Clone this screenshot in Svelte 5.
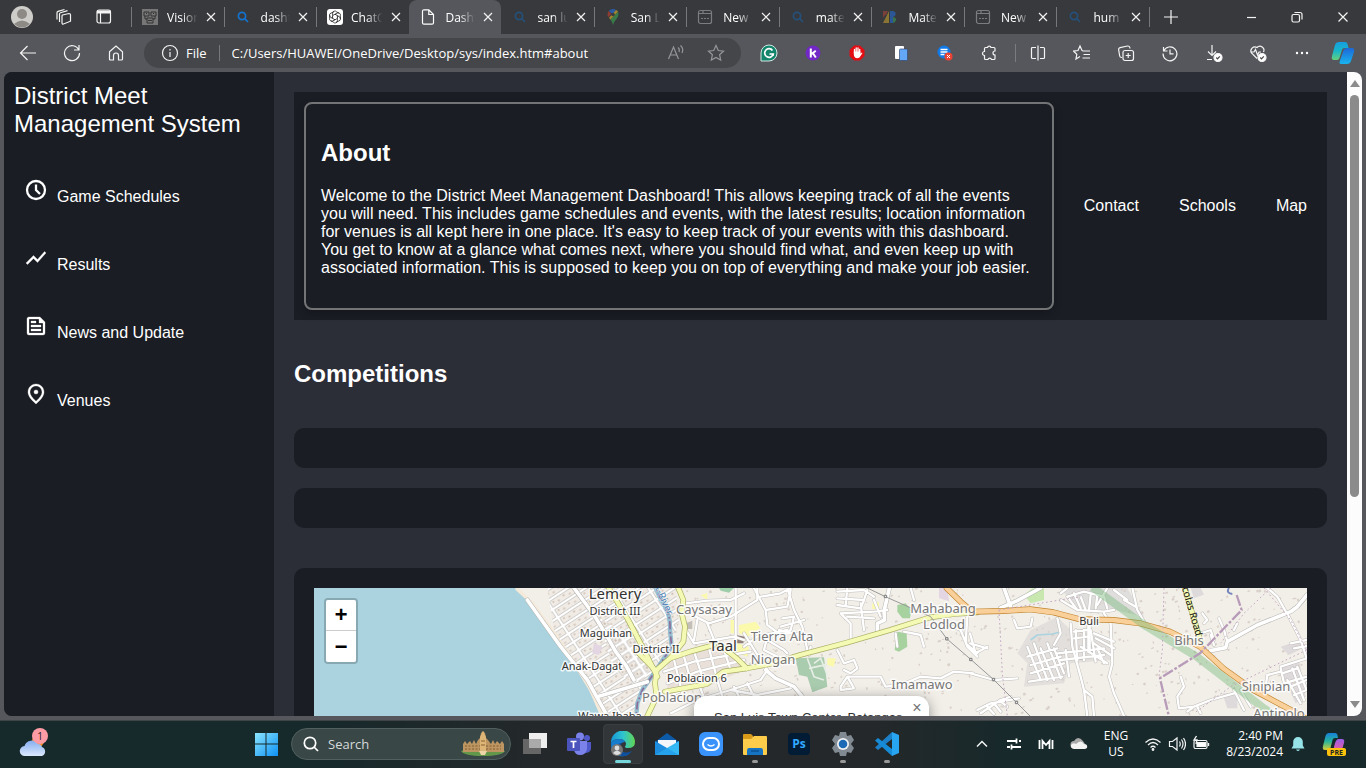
<script>
  const tabs = [
    { icon: 'vision', text: 'Vision' },
    { icon: 'search', text: 'dasht' },
    { icon: 'gpt', text: 'ChatG' },
    { icon: 'page', text: 'Dasht', active: true },
    { icon: 'searchDim', text: 'san lu' },
    { icon: 'pin', text: 'San L' },
    { icon: 'newtab', text: 'New' },
    { icon: 'searchDim', text: 'mate' },
    { icon: 'material', text: 'Mate' },
    { icon: 'newtab', text: 'New' },
    { icon: 'searchDim', text: 'hum' }
  ];

  const extensions = [
    ['Grammarly', 'grammarly'], ['Kami', 'kami'], ['AdBlock', 'adblock'],
    ['Clipboard', 'clip'], ['Reader', 'reader'], ['Extensions', 'puzzle']
  ];
  const tools = [
    ['Split screen', 'split'], ['Favorites', 'favs'], ['Collections', 'collect'],
    ['History', 'history'], ['Downloads', 'download'],
    ['Browser essentials', 'heart'], ['Settings and more', 'dots']
  ];
  const nav = [
    ['Game Schedules', 'clock'], ['Results', 'trend'],
    ['News and Update', 'news'], ['Venues', 'venue']
  ];
  const links = ['Contact', 'Schools', 'Map'];
  const apps = [
    ['Task view', 'taskview'], ['Teams', 'teams'], ['Edge', 'edge', 'active'],
    ['Mail', 'mail'], ['Browser', 'zoomapp'], ['File Explorer', 'files', 'open'],
    ['Photoshop', 'ps'], ['Settings', 'gear', 'open'], ['Visual Studio Code', 'code', 'open']
  ];

  // Road geometry is drawn at three units per pixel.
  const minor = [
    // Taal
    'M1115 70 L1180 62 L1250 60 L1290 40 M1145 110 L1185 130 L1250 110 L1330 60 L1330 24 M1110 140 L1140 190 L1200 180 L1260 170 L1290 180',
    'M1050 275 L1140 245 L1250 225 L1310 215 M1060 310 L1150 275 L1290 240 M1075 345 L1170 300 L1250 265 M1140 215 L1165 290 M1185 205 L1210 300 L1240 400 M1225 195 L1250 270 M1110 230 L1130 300 M1080 240 L1105 340 M1150 300 L1180 380',
    'M1070 400 L1150 360 L1250 330 L1340 300 L1360 270 M1250 330 L1330 345 L1430 325 M1300 310 L1320 350 M1260 320 L1275 350',
    'M1290 160 L1340 240 L1360 270 M1290 200 L1330 170 L1420 150 M1320 24 L1355 90 L1360 135 L1400 165 L1430 150 L1440 110 L1405 115 M1355 90 L1420 80 L1430 30 M1340 50 L1400 40 L1430 24 M1420 24 L1440 90 L1465 140 L1480 210 M1400 140 L1470 120 M1395 150 L1480 170 M1360 180 L1410 210 L1420 220 M1360 170 L1350 210 L1390 230',
    'M1265 24 L1265 180 M1180 130 L1200 180 M1150 120 L1140 180',
    // Mahabang
    'M1570 35 L1650 30 L1680 50 M1570 55 L1650 60 L1660 30 M1570 75 L1640 85 L1650 60 M1600 24 L1595 75 M1580 100 L1610 130 L1610 175 M1580 100 L1680 95 L1720 90 M1600 110 L1680 115 M1640 70 L1650 150 M1680 60 L1700 110 M1790 24 L1800 60',
    'M1490 200 L1485 225 M1570 210 L1590 250 L1620 240 L1630 265 L1610 280 L1590 270 M1600 290 L1620 325 L1580 330 L1580 320 L1600 290 L1640 290 L1700 290 L1715 320 L1760 315 L1820 290 L1880 295 L1920 275 L1978 280',
    'M1770 155 L1820 165 L1830 200 M1745 160 L1750 200 M1890 130 L1940 150 L1960 200 L1990 230 M1960 110 L1955 190 L1990 220',
    // Buli
    'M2100 120 L2110 145 L2150 140 L2155 115 M2230 115 L2240 160 L2220 195 M2270 130 L2275 200 L2300 290 L2310 330 L2320 408 M2310 330 L2335 350 L2340 408',
    'M2380 24 L2350 75 M2370 100 L2390 130 L2395 250 L2385 290 L2400 340 L2430 408 M2455 24 L2470 90 L2490 125 M2430 60 L2465 80',
    'M2240 40 L2260 24 M2260 50 L2290 90 M2280 40 L2300 85 M2300 50 L2315 90 M2330 45 L2325 90 M2350 45 L2345 85 M2240 60 L2290 90 L2370 95 L2400 90 M2260 50 L2310 35 L2370 50 L2380 85 M2400 30 L2440 60',
    // Buli subdivision
    'M2140 200 L2180 300 M2160 190 L2200 300 M2180 205 L2220 300 M2200 190 L2240 295 M2220 205 L2250 280 M2140 230 L2230 205 M2150 255 L2240 230 M2150 280 L2250 250 M2145 305 L2245 290 M2230 220 L2370 205 M2240 240 L2370 225 M2255 210 L2265 290 M2285 150 L2290 240 M2310 150 L2310 240 M2280 155 L2320 150 M2280 175 L2320 170 M2340 160 L2400 185 M2345 175 L2400 205 M2340 190 L2390 225 M2350 205 L2370 250 M2330 150 L2345 245 M2300 200 L2380 250',
    'M1990 390 L2030 370 L2115 355 M2000 400 L2060 360 L2090 350 M2020 380 L2040 402 M2040 370 L2060 395 M2060 365 L2080 380 M1970 280 L2040 300 L2110 295 M1968 160 L1985 220 L2020 200 M1968 190 L2020 205',
    // Bihis and Sinipian
    'M2660 160 L2690 150 L2700 180 M2670 130 L2680 120 L2665 100 M2715 115 L2730 150 L2740 185 M2770 130 L2760 150 M2690 165 L2700 195',
    'M2600 290 L2610 320 L2590 350 L2595 385 L2640 380 L2690 360 L2760 340 M2620 395 L2640 380 M2650 380 L2660 400 M2760 330 L2790 390 M2780 330 L2810 380',
    'M2860 24 L2890 50 L2930 120 L2960 180 L2978 235 M2930 190 L2978 180 M2940 205 L2978 198 M2900 260 L2978 235 M2900 265 L2910 310 L2978 290 M2905 280 L2950 265 M2920 300 L2960 370 M2935 265 L2970 360 M2950 260 L2978 330 M2930 320 L2978 300 M2940 345 L2978 330 M2855 320 L2860 285 L2900 275'
  ];
  const wide = [
    'M780 24 L840 105 L880 170 L905 215 L935 255 L960 300',
    'M850 350 L935 325 L1000 305',
    'M640 60 L740 200 L820 300 L880 408',
    'M1355 270 L1385 295 L1440 320 L1465 350',
    'M1726 24 L1710 95 L1712 120 L1690 130 L1690 150',
    'M2060 84 L2110 62 L2180 24 M2070 24 L2090 80',
    'M2325 135 L2325 215',
    'M2690 212 L2735 203 L2740 185 L2830 135 L2930 95 L2950 80 L2979 45'
  ];
  const yellow = [
    'M870 0 L940 115 L985 200 L1020 270 L1030 290',
    'M1093 24 L1108 60 L1103 100 L1113 140 L1108 185 L1068 235 L1028 270 L1023 310 L1028 350 L1000 408',
    'M970 215 L1023 270',
    'M1068 235 L1128 215 L1200 195',
    'M1218 195 L1268 235 L1298 265',
    'M1053 335 L1178 312 L1228 275 L1298 265 L1378 250 L1458 225 L1598 188 L1728 150 L1848 112 L1920 102 L1990 97',
    'M2612 24 L2635 100 L2660 185'
  ];
  const orange = [
    'M1898 24 L1940 65 L1975 95 L2068 93 L2148 88 L2218 97 L2298 118 L2398 120 L2478 130 L2568 155 L2658 200 L2728 265 L2818 330 L2940 395 L2979 418'
  ];

  // Small building footprints, spread by a fixed linear sequence.
  let seed = 71;
  const rnd = () => (seed = (seed * 16807) % 2147483647) / 2147483647;
  const spots = [];
  for (let i = 0; i < 480; i++) {
    const x = i < 60 ? 1080 + rnd() * 400 : 1080 + rnd() * 1890;
    spots.push([Math.round(x), Math.round(24 + rnd() * 384), Math.round(3 + rnd() * 6), Math.round(3 + rnd() * 5)]);
  }

  const labels = [
    [301, 11, 'Lemery', 'big'], [301, 27, 'District III', 'small'], [292, 49, 'Maguihan', 'small'],
    [342, 65, 'District II', 'small'], [278, 82, 'Anak-Dagat', 'small'], [296, 132, 'Wawa Ibaba', 'small'],
    [390, 26, 'Caysasay', 'grey'], [468, 53, 'Tierra Alta', 'grey'], [409, 63, 'Taal', 'big'],
    [459, 76, 'Niogan', 'grey'], [383, 94, 'Poblacion 6', 'small'], [358, 114, 'Poblacion', 'grey'],
    [629, 25, 'Mahabang', 'grey'], [630, 41, 'Lodlod', 'grey'], [608, 101, 'Imamawo', 'grey'],
    [775, 37, 'Buli', 'small'], [875, 57, 'Bihis', 'grey'], [952, 103, 'Sinipian', 'grey'],
    [965, 130, 'Antipolo', 'grey']
  ];
</script>

{#snippet icon(name)}
  {#if name === 'vision'}
    <svg width="16" height="16" viewBox="0 0 16 16"><path fill="#777" d="M0 0h16v16H0z"/><path d="M2 3h5v4H2zM9 3h5v4H9zM5 9h6v5H5zM3 7v3h2M13 7v3h-2M6 11.5h4" fill="none" stroke="#333"/><path d="M4 4.5h1M11 4.5h1" stroke="#333"/></svg>
  {:else if name === 'search' || name === 'searchDim'}
    <svg width="16" height="16" viewBox="0 0 16 16" fill="none" stroke={name === 'search' ? '#1373d1' : '#245079'} stroke-width="1.7"><circle cx="7" cy="7" r="3.6"/><path d="M9.7 9.7 13 13"/></svg>
  {:else if name === 'gpt'}
    <svg width="16" height="16" viewBox="0 0 16 16"><rect width="16" height="16" rx="3" fill="#fff"/><g fill="none" stroke="#222" stroke-width=".8">{#each [0, 60, 120, 180, 240, 300] as a}<path transform="rotate({a} 8 8)" d="M8 5.2 5.6 6.6V4.2a2.3 2.3 0 0 1 4-1.4L12 4.3"/>{/each}</g></svg>
  {:else if name === 'page'}
    <svg width="16" height="16" viewBox="0 0 16 16" fill="none" stroke="#fff" stroke-width="1.2"><path d="M4 .8h4.8L13.500 5.500v8.200q0 1.500-1.500 1.500H4q-1.500 0-1.500-1.500V2.300Q2.500.8 4 .8zM8.800 1v4.500h4.500"/></svg>
  {:else if name === 'pin'}
    <svg width="16" height="16" viewBox="0 0 16 16"><path d="M8 0a5.500 5.500 0 0 0-4.200 2L8 5.500 11 .9A6 6 0 0 0 8 0z" fill="#2b5aa5"/><path d="M3.800 2a5.500 5.500 0 0 0-.5 6.200L6.200 5z" fill="#8f3a33"/><path d="M11 .9 4 8.800l1.500 2 7.700-8A6 6 0 0 0 11 .9z" fill="#a08432"/><path d="M13 2.800 5.500 10.800Q7.400 13 8 16q.7-3 3-5.500 3.600-4 2-7.700z" fill="#3a7a48"/><circle cx="8" cy="5.500" r="1.800" fill="#3c3d40"/></svg>
  {:else if name === 'newtab'}
    <svg width="16" height="16" viewBox="0 0 16 16" fill="none" stroke="#7c7d80" stroke-width="1.200"><rect x="1.500" y="1.500" width="13" height="13" rx="2"/><path d="M2 4.500h12M6 1.500v3M4 9.500h2M7 9.500h2M10 9.500h2"/></svg>
  {:else if name === 'material'}
    <svg width="16" height="16" viewBox="0 0 16 16"><path d="M1 2h5L1 9z" fill="#79403b"/><path d="M7 2v12H1z" fill="#8a7433"/><path d="M8 2h3v12H8z" fill="#2c5796"/><path d="M11 2q4 1 2 5l-2 1z" fill="#2c5796"/><path d="M11 8q5 1 2 5l-2 1z" fill="#39734a"/><circle cx="3" cy="4" r="2" fill="#79403b"/></svg>
  {:else if name === 'close'}
    <svg width="12" height="12" viewBox="0 0 12 12" stroke="#f2f2f2" stroke-width="1.200"><path d="m2 2 8 8M10 2l-8 8"/></svg>
  {:else if name === 'grammarly'}
    <svg width="18" height="18" viewBox="0 0 18 18"><path d="M9 1a8 8 0 0 1 0 16H1V9a8 8 0 0 1 8-8z" fill="#12846c" stroke="#cfe8e1"/><path d="M12.500 6.500A4.300 4.300 0 1 0 13.200 10H9.500M13.200 9.800v2" fill="none" stroke="#fff" stroke-width="1.700"/></svg>
  {:else if name === 'kami'}
    <svg width="16" height="16" viewBox="0 0 16 16"><circle cx="8" cy="8" r="7.500" fill="#7128c7"/><path d="M5.800 3.500v9M10.800 5.800 6.500 9M7.800 8l3 4.500" fill="none" stroke="#fff" stroke-width="2"/></svg>
  {:else if name === 'adblock'}
    <svg width="16" height="16" viewBox="0 0 16 16"><path d="M5 .5h6L15.500 5v6L11 15.500H5L.5 11V5z" fill="#e40d13"/><path d="M5.500 8V4.500M7.200 7V3M9 7V3M10.700 9V4.500" fill="none" stroke="#fff" stroke-width="1.300" stroke-linecap="round"/><path d="M4.800 6.500h6.600V9l1.300-1.500.8.6L10.500 12.500q-2.500 1.500-4.500 0-1.200-1.500-1.200-3z" fill="#fff"/></svg>
  {:else if name === 'clip'}
    <svg width="16" height="16" viewBox="0 0 16 16"><rect x="2" y="1" width="9" height="13" rx="1" fill="#fff"/><rect x="6.500" y="4" width="8" height="11.500" rx="1" fill="#65a7f7" stroke="#344c73" stroke-width=".7"/></svg>
  {:else if name === 'reader'}
    <svg width="16" height="16" viewBox="0 0 16 16"><circle cx="7" cy="7" r="6.500" fill="#117ae8"/><path d="M3.500 4.500h7M3.500 7h7M3.500 9.500h4" stroke="#fff" stroke-width="1.300"/><circle cx="11.500" cy="11.500" r="4" fill="#ea4335"/><path d="m10 10 3 3m0-3-3 3" stroke="#fff"/></svg>
  {:else if name === 'puzzle'}
    <svg width="18" height="18" viewBox="0 0 18 18" class="line"><path d="M7.500 3.500a1.800 1.800 0 0 1 3.500 0H14q1 0 1 1V7a1.800 1.800 0 0 0 0 4v3.500q0 1-1 1h-2.500a1.900 1.900 0 0 0-3.600 0H5.500q-1 0-1-1v-3a1.900 1.900 0 0 1 0-4v-3q0-1 1-1z"/></svg>
  {:else if name === 'split'}
    <svg width="18" height="18" viewBox="0 0 18 18" class="line"><path d="M7 3.500H3.500q-1 0-1 1v9q0 1 1 1H7M11 3.500h3.500q1 0 1 1v9q0 1-1 1H11M9 1.500v15"/></svg>
  {:else if name === 'favs'}
    <svg width="18" height="18" viewBox="0 0 18 18" class="line"><path d="M9 6.500 7 2 5 6.500l-4.500.6 3.300 3.100L3 15l4-2.500M10 7h7M10.500 10.500H17M9.500 14H17M9 6.500l1 .5"/></svg>
  {:else if name === 'collect'}
    <svg width="18" height="18" viewBox="0 0 18 18" class="line"><rect x="6" y="6.500" width="10.500" height="10" rx="2"/><path d="M11.200 9v5M8.700 11.500h5M5 13.500q-2 .2-2.300-1.500L1.600 5.500Q1.500 4 3 3.600L10.500 2q2-.2 2.300 1.500l.2 1"/></svg>
  {:else if name === 'history'}
    <svg width="18" height="18" viewBox="0 0 18 18" class="line"><path d="M2.500 3v4h4M2.700 7A6.900 6.900 0 1 1 2.100 9.500M9 5.500v4.300h3.500"/></svg>
  {:else if name === 'download'}
    <svg width="18" height="18" viewBox="0 0 18 18" class="line"><path d="M7 1v10M3 7.500 7 11.500l4-4M2 15.500h5"/><circle cx="13" cy="13.500" r="4" fill="#fff"/><path stroke="#444" d="m11.300 13.500 1.200 1.300 2.300-2.500"/></svg>
  {:else if name === 'heart'}
    <svg width="18" height="18" viewBox="0 0 18 18" class="line"><path d="M8 14.500 2.500 9A4 4 0 0 1 8 3.500 4 4 0 0 1 14.500 8M2 8h3l1.500-2.500L8.500 11 10 8h2"/><circle cx="13" cy="13.500" r="4" fill="#fff"/><path stroke="#444" d="m11.300 13.500 1.200 1.300 2.300-2.500"/></svg>
  {:else if name === 'dots'}
    <svg width="18" height="18" viewBox="0 0 18 18" fill="#fff"><circle cx="4" cy="9" r="1.200"/><circle cx="9" cy="9" r="1.200"/><circle cx="14" cy="9" r="1.200"/></svg>
  {:else if name === 'copilot'}
    <svg width="26" height="26" viewBox="0 0 26 26"><path d="M9 2h6q2 0 2.500 2l1 4h-4q-2 0-2.600 2l-2.400 8q-.7 2-2.500 2H4q-3 0-2-4L5 5q1-3 4-3z" fill="url(#cpA)"/><path d="M17 24h-6q-2 0-1.500-2l4-11.500Q14.300 8 16.500 8H22q3 0 2 4l-3 9q-1 3-4 3z" fill="url(#cpB)"/><defs><linearGradient id="cpA" x2="0" y2="1"><stop stop-color="#159de0"/><stop offset=".5" stop-color="#18b7c9"/><stop offset="1" stop-color="#65d27b"/></linearGradient><linearGradient id="cpB" x2="0" y2="1"><stop stop-color="#1d67d8"/><stop offset="1" stop-color="#18b4ee"/></linearGradient></defs></svg>
  {:else if name === 'clock'}
    <svg width="24" height="24" viewBox="0 0 24 24" fill="none" stroke="#fff" stroke-width="2.300"><circle cx="12" cy="12" r="9"/><path d="M12 6.500V12l4 4"/></svg>
  {:else if name === 'trend'}
    <svg width="24" height="24" viewBox="0 0 24 24" fill="#fff" stroke="#fff" stroke-width=".3"><path d="m3.500 18.500 6-6 4 4L22 6.900l-1.400-1.400-7.100 8-4-4L2 17z"/></svg>
  {:else if name === 'news'}
    <svg width="24" height="24" viewBox="0 0 24 24" fill="#fff" stroke="#fff" stroke-width=".3"><path d="m16 3 5 5v11a2 2 0 0 1-2 2H5a2 2 0 0 1-2-2V5c0-1.100.9-2 2-2h11zm-1 2H5v14h14V9h-4V5zM7 7h5v2H7zm0 4h10v2H7zm0 4h10v2H7z" fill-rule="evenodd"/></svg>
  {:else if name === 'venue'}
    <svg width="24" height="24" viewBox="0 0 24 24" fill="#fff" stroke="#fff" stroke-width=".3"><path fill-rule="evenodd" d="M12 2C8 2 4 5 4 10.200c0 3.300 2.700 7.200 8 11.800 5.300-4.600 8-8.500 8-11.800C20 5 16 2 12 2zm0 17.300c-4-3.700-6-6.700-6-9.100C6 6.600 8.600 4 12 4s6 2.600 6 6.200c0 2.400-2 5.400-6 9.100z"/><circle cx="12" cy="10" r="2.100"/></svg>
  {:else if name === 'taskview'}
    <svg width="26" height="26" viewBox="0 0 26 26"><path d="M1 8h18v15H1z" fill="#666"/><path d="M7 2h18v15H7z" fill="#eee"/><path d="M7 8h12v9H7z" fill="#aaa"/></svg>
  {:else if name === 'teams'}
    <svg width="26" height="26" viewBox="0 0 26 26"><circle cx="21" cy="7" r="3" fill="#5059c9"/><path d="M17 11h8v7q-1 4-6 4z" fill="#5059c9"/><circle cx="14" cy="5.500" r="4" fill="#7b83eb"/><path d="M9 10h12v8q-1 6-7 6-5 0-6-5z" fill="#7b83eb"/><rect x="1" y="7" width="13" height="13" rx="1" fill="#4b53bc"/><path d="M4.500 10.500h6M7.500 10.500v6.500" stroke="#fff" stroke-width="1.700"/></svg>
  {:else if name === 'edge'}
    <svg width="26" height="26" viewBox="0 0 26 26"><defs><linearGradient id="eg"><stop stop-color="#1796d4"/><stop offset=".5" stop-color="#2ec4cf"/><stop offset="1" stop-color="#61d653"/></linearGradient></defs><path d="M1 12A12 12 0 0 1 25 11q0 6-7 6-3 0-3-1.500 1-1 1-3Q15 8 9 8 3 8 1 12z" fill="url(#eg)"/><path d="M1 12q2-4 8-4 5 0 6 3-6 0-5 6 2 6 9 6-4 3-9 2Q0 22 1 12z" fill="#167ccd"/><path d="M12 12q-3 2-2 6 3 6 12 2-4 6-11 5-7-3-4-10 1-3 5-3z" fill="#104f9e"/><circle cx="7" cy="19" r="6" fill="#777"/><circle cx="7" cy="17" r="2.400" fill="#ddd"/><path d="M3 22q4-5 8 0-4 4-8 0z" fill="#ddd"/></svg>
  {:else if name === 'mail'}
    <svg width="26" height="26" viewBox="0 0 26 26"><path d="M1 11 13 2l12 9v4H1z" fill="#0d5ba8"/><path d="M4 9h18v8H4z" fill="#f4f6f9"/><path d="m1 10 12 7L1 24z" fill="#1d8de0"/><path d="m25 10-24 14h24z" fill="#35b8f4"/><path d="m1 24 12-7 12 7z" fill="#25a2ec"/></svg>
  {:else if name === 'zoomapp'}
    <svg width="26" height="26" viewBox="0 0 26 26"><rect x="1" y="1" width="24" height="24" rx="6" fill="#3a92fb"/><rect x="5" y="7" width="16" height="12" rx="6" fill="none" stroke="#fff" stroke-width="2"/><path d="M9.500 13.500q3.500 3 7 0" fill="none" stroke="#fff" stroke-width="1.300"/></svg>
  {:else if name === 'files'}
    <svg width="26" height="26" viewBox="0 0 26 26"><path d="M1 4q0-1 1-1h7l2 2v6H1z" fill="#d99a1a"/><path d="M1 8h8l3-3h12q1 0 1 1v17q0 1-1 1H2q-1 0-1-1z" fill="#fccc4a"/><path d="M5 20q0-3 2-3h12q2 0 2 3v4H5z" fill="#1673c2"/><path d="M9 20h8" stroke="#0c4f92" stroke-width="1.500"/></svg>
  {:else if name === 'ps'}
    <svg width="24" height="24" viewBox="0 0 24 24"><rect x="1" y="1" width="22" height="22" rx="4" fill="#021c35"/><text x="12" y="16" text-anchor="middle" class="pstext">Ps</text></svg>
  {:else if name === 'gear'}
    <svg width="26" height="26" viewBox="0 0 26 26"><path d="m10 1 6 0 1 4 4-1 3 5-3 4 3 4-3 5-4-1-1 4h-6l-1-4-4 1-3-5 3-4-3-4 3-5 4 1z" fill="#818a92"/><circle cx="13" cy="13" r="6" fill="#eef1f3"/><circle cx="13" cy="13" r="4.300" fill="#1c69b5"/></svg>
  {:else if name === 'code'}
    <svg width="26" height="26" viewBox="0 0 26 26"><path d="m18 1 7 3v18l-7 3z" fill="#28a5f0"/><path d="M18 1v7L4 19l-3-2.500z" fill="#1c80c9"/><path d="M18 25v-7L4 7 1 9.500z" fill="#168bd8"/></svg>
  {/if}
{/snippet}

<div class="screen">
  <header class="tabbar">
    <div class="lead">
      <button aria-label="Profile"><svg width="24" height="24" viewBox="0 0 24 24"><circle cx="12" cy="12" r="11" fill="#cfcdc9"/><circle cx="12" cy="9" r="5" fill="#8d8a86"/><path d="M4 19q8-7 16 0-8 7-16 0z" fill="#8d8a86"/></svg></button>
      <button aria-label="Workspaces"><svg width="18" height="18" viewBox="0 0 18 18" class="line"><path d="M8.500 7 15 5.500q1.500 0 1.500 1.200v6.500L9.500 16q-1.500.3-1.500-1V8q0-.8.500-1zM5.500 14V6q0-1 1-1.300l7-2M3 11.500V4.700q0-1 1-1.300L10.500 1.500"/></svg></button>
      <button aria-label="Tab actions"><svg width="18" height="18" viewBox="0 0 18 18" class="line"><rect x="2" y="2" width="13.500" height="13" rx="2"/><path d="M2 4h13.500" stroke-width="3"/><path d="M5.500 5v10"/></svg></button>
    </div>
    <nav class="tabs" aria-label="Open tabs">
      {#each tabs as tab}
        <div class="tab" class:active={tab.active}>
          <span class="fav">{@render icon(tab.icon)}</span>
          <span class="tabtext">{tab.text}</span>
          <button class="x" aria-label="Close tab">{@render icon('close')}</button>
        </div>
      {/each}
    </nav>
    <button class="plus" aria-label="New tab"><svg width="16" height="16" viewBox="0 0 16 16" class="line"><path d="M8 1v14M1 8h14"/></svg></button>
    <div class="winctl">
      <button aria-label="Minimize"><svg width="12" height="12" viewBox="0 0 12 12" class="line"><path d="M2 6.500h9"/></svg></button>
      <button aria-label="Restore"><svg width="12" height="12" viewBox="0 0 12 12" class="line"><rect x="1" y="3.500" width="7.500" height="7.500" rx="1.500"/><path d="M3.500 1.500h5.500q2 0 2 2V8.500"/></svg></button>
      <button aria-label="Close"><svg width="12" height="12" viewBox="0 0 12 12" class="line"><path d="m1.500 1.500 9 9m0-9-9 9"/></svg></button>
    </div>
  </header>

  <div class="toolbar">
    <button class="tool" aria-label="Back"><svg width="18" height="18" viewBox="0 0 18 18" class="line"><path d="M17 9H1.500M8.500 2l-7 7 7 7"/></svg></button>
    <button class="tool" aria-label="Refresh"><svg width="18" height="18" viewBox="0 0 18 18" class="line"><path d="M15.800 6A7.500 7.500 0 1 0 16.500 9M16 1v5h-5"/></svg></button>
    <button class="tool" aria-label="Home"><svg width="18" height="18" viewBox="0 0 18 18" class="line"><path d="M2.500 7.800 9 2l6.500 5.800V15q0 1-1 1h-3v-4.500a2.500 2.500 0 0 0-5 0V16h-3q-1 0-1-1z"/></svg></button>
    <div class="address">
      <svg width="18" height="18" viewBox="0 0 18 18" class="line"><circle cx="9" cy="9" r="7.500"/><path d="M9 8v5M9 5v1.500"/></svg>
      <span class="file">File</span>
      <input aria-label="Address" value="C:/Users/HUAWEI/OneDrive/Desktop/sys/index.htm#about" />
      <button aria-label="Read aloud"><svg width="18" height="18" viewBox="0 0 18 18" class="line dim"><path d="M1.500 15 6.500 3l5 12M3 11h7M11 3.500q2 1.500 1 4.500M13.500 1.500q3.500 3 1.500 7.500"/></svg></button>
      <button aria-label="Favorite"><svg width="18" height="18" viewBox="0 0 18 18" class="line dim"><path d="m9 1.500 2.300 5 5.200.6-3.900 3.600 1.100 5.300L9 13.400 4.300 16l1.100-5.300L1.500 7.100l5.200-.6z"/></svg></button>
    </div>
    {#each extensions as [label, name]}
      <button class="tool" aria-label={label}>{@render icon(name)}</button>
    {/each}
    <span class="rule"></span>
    {#each tools as [label, name]}
      <button class="tool" aria-label={label}>{@render icon(name)}</button>
    {/each}
    <button class="tool cop" aria-label="Copilot">{@render icon('copilot')}</button>
  </div>

  <div class="view">
    <aside>
      <h1>District Meet Management System</h1>
      <ul>
        {#each nav as [label, name]}
          <li><a href="#{name}">{@render icon(name)}<span>{label}</span></a></li>
        {/each}
      </ul>
    </aside>
    <main>
      <section class="top">
        <article>
          <h2>About</h2>
          <p>Welcome to the District Meet Management Dashboard! This allows keeping track of all the events you will need. This includes game schedules and events, with the latest results; location information for venues is all kept here in one place. It's easy to keep track of your events with this dashboard. You get to know at a glance what comes next, where you should find what, and even keep up with associated information. This is supposed to keep you on top of everything and make your job easier.</p>
        </article>
        <nav>
          {#each links as link}<a href="#{link}">{link}</a>{/each}
        </nav>
      </section>
      <h2 class="comp">Competitions</h2>
      <div class="bars"><div></div><div></div></div>
      <section class="mapcard">
        <div class="map">
          <svg class="ground" role="img" aria-label="Map of Lemery and Taal">
            <defs>
              <pattern id="blocks" width="34" height="30" patternUnits="userSpaceOnUse" patternTransform="rotate(-33)">
                <path d="M0 0h34v30H0z" fill="#f0ebe4"/>
                <path d="M11 11h6v7h-6zM21 17h6v5h-6z" fill="#cdbfb6"/>
                <path d="M0 0h34v30H0z" fill="none" stroke="#b9b6b3" stroke-width="13"/>
                <path d="M0 0h34v30H0z" fill="none" stroke="#fff" stroke-width="9"/>
              </pattern>
              <pattern id="longblocks" width="92" height="29" patternUnits="userSpaceOnUse" patternTransform="rotate(-33)">
                <path d="M0 0h92v29H0z" fill="#f0ebe4"/>
                <path d="M12 9h5v5h-5zM28 14h6v5h-6zM48 9h6v5h-6zM66 15h7v4h-7z" fill="#cdbfb6"/>
                <path d="M0 0h92v29H0z" fill="none" stroke="#c2bfbb" stroke-width="11"/>
                <path d="M0 0h92v29H0z" fill="none" stroke="#fff" stroke-width="7"/>
              </pattern>
            </defs>
            <rect width="100%" height="100%" fill="#f2efe9"/>
            <g transform="translate(0 -8) scale(.33333)">
              <path d="M700 24H1085L1095 130 1060 205 1030 255 985 315 965 410H865L830 330 775 240 720 150z" fill="url(#longblocks)"/>
              <path d="M850 110 1000 200 1010 260 975 320 900 270z" fill="url(#blocks)"/>
              <path d="M1060 240 1200 195 1300 240 1290 270 1180 320 1060 350z" fill="#e9e1d9"/>
              <path d="M2150 150 2230 110 2270 150 2400 180 2390 240 2270 250 2250 310 2130 320 2140 250 2110 220z" fill="#e2dfdd"/>
              <path d="M2240 24 2440 24 2490 110 2400 90 2290 90z" fill="#e0dedc"/>
              <path d="M2630 24h30l10 20-30 10zM2900 200l60-20 15 20-50 25zM2725 340l45 0 0 45-30 0zM2895 260l60-20 20 110-30 20z" fill="#ded9db"/>
              <path d="M1875 24h25l5 40-30-10zM840 190l25 10-10 25-20-5z" fill="#e3d5e2"/>
              {#each spots as [x, y, w, h]}<rect {x} {y} width={w} height={h} fill="#d9d0c9" transform="rotate(-20 {x} {y})"/>{/each}
              <path d="M0 0H590L650 65 705 140 770 235 825 325 865 420H0z" fill="#aad3df"/>
              <path d="M606 24 655 70 710 145 775 240 830 330 870 420" fill="none" stroke="#f5ead9" stroke-width="10"/>
              <path d="M1445 235 1530 232 1540 320 1495 337 1480 290 1455 285z" fill="#a9cbae"/>
              <path d="M1480 235l20 55 30 10M1500 250l20-15 20 50M1485 265l55-12" fill="none" stroke="#e7eee6" stroke-width="5"/>
              <path d="M1750 75 1775 70 1792 90 1788 115 1765 115 1750 95zM1750 155 1778 160 1780 200 1755 215 1742 210z" fill="#a7d2a0"/>
              <path d="M1215 24h45l-15 14-25-6z" fill="#9fceaa"/><path d="M2130 45l25-20 35 0 0 35-40 10z" fill="#c8e8b0"/>
              <path d="M1250 120h15v40h-15zM1275 135l50-10 15 20-40 25-25-10zM1270 190l35 10-5 30-30-10zM1540 235l25 0-5 25-20-5zM1675 70l20-3 0 20-20 0zM1160 45l20-5 0 20z" fill="#fbf9ac"/>
              <path d="M1265 165l28 5-5 20-20 0z" fill="#8f7d77"/><path d="M1115 130l20-8 0 25-15 0z" fill="#c4beb9"/>
              <path d="M1015 0Q1030 40 1053 80 1070 110 1068 150L1073 200 1023 275 985 330 970 370 966 420" fill="none" stroke="#94bdd0" stroke-width="13"/>
              <path d="M1015 0Q1030 40 1053 80 1070 110 1068 150L1073 200 1023 275 985 330 970 370 966 420" fill="none" stroke="#8a6e99" stroke-width="5" stroke-dasharray="24 8 5 8"/>
              <path d="M2150 180l20-15 45-3 25-6" fill="none" stroke="#aad3df" stroke-width="5"/>
              {#each minor as d}<path {d} class="c1"/>{/each}
              {#each wide as d}<path {d} class="c2"/>{/each}
              {#each minor as d}<path {d} class="f1"/>{/each}
              {#each wide as d}<path {d} class="f2"/>{/each}
              {#each yellow as d}<path {d} class="cy"/>{/each}
              {#each yellow as d}<path {d} class="fy"/>{/each}
              {#each orange as d}<path {d} class="co"/>{/each}
              {#each orange as d}<path {d} class="fo"/>{/each}
              <path d="M2335 22 2498 140 2648 230 2850 385 2900 420" fill="none" stroke="#73b878" stroke-opacity=".42" stroke-width="24"/>
              <path d="M2055 90 2065 280 2080 408M2055 90 2300 50M2550 24 2545 210 2535 290M2870 24 2790 100 2720 190M2978 210 2750 320 2640 400M2850 24 2930 120 2978 210" class="dots"/>
              <path d="M2768 45 2783 90 2658 220 2538 295 2565 410" class="border"/>
              <path d="M2745 24q-10 15 10 18" fill="none" stroke="#7586bd" stroke-width="6"/>
              <path d="M1660 24 1714 50 1850 110 1898 176 1970 238 2038 298 2108 368 2150 410" fill="none" stroke="#999" stroke-width="3"/>
              <path d="M1711 46h7v7h-7zM1895 173h7v7h-7zM1967 235h7v7h-7zM2035 295h7v7h-7zM2104 364h7v7h-7z" fill="#eee" stroke="#777" stroke-width="3"/>
            </g>
            {#each labels as [x, y, text, kind]}<text {x} {y} class={kind}>{text}</text>{/each}
            <text class="road" transform="translate(868 0) rotate(74)">colas Road</text>
            <text class="river" transform="translate(341 0) rotate(66)">t-River</text>
          </svg>
          <div class="zoom"><button aria-label="Zoom in">+</button><button aria-label="Zoom out">−</button></div>
          <div class="popup">San Luis Town Center, Batangas<button aria-label="Close popup">×</button></div>
        </div>
      </section>
    </main>
    <div class="scroll"><span class="up"></span><span class="thumb"></span><span class="down"></span></div>
  </div>

  <footer>
    <button class="weather" aria-label="Weather"><svg width="32" height="32" viewBox="0 0 32 32"><defs><linearGradient id="cl" x2="0" y2="1"><stop stop-color="#85aef0"/><stop offset="1" stop-color="#dce9fd"/></linearGradient></defs><circle cx="20" cy="13" r="6" fill="#f58a1f"/><path d="M7 28a5 5 0 0 1-.5-10A7.500 7.500 0 0 1 20 16q3 0 4 3a4.800 4.800 0 0 1 0 9z" fill="url(#cl)"/><circle cx="22" cy="8" r="8" fill="#ff9ba5"/><text x="22" y="12" text-anchor="middle" class="badge">1</text></svg></button>
    <div class="dock">
      <button aria-label="Start"><svg width="24" height="24" viewBox="0 0 24 24"><defs><linearGradient id="wn" x2="1" y2="1"><stop stop-color="#8be4fc"/><stop offset="1" stop-color="#0d91f5"/></linearGradient></defs><path d="M1 1h10.500v10.500H1zM12.500 1H24v10.500H12.500zM1 12.500h10.500V24H1zM12.500 12.500H24V24H12.500z" fill="url(#wn)"/></svg></button>
      <label class="find">
        <svg width="16" height="16" viewBox="0 0 16 16" fill="none" stroke="#fff" stroke-width="1.700"><circle cx="7" cy="7" r="5.700"/><path d="m11 11 4 4"/></svg>
        <input aria-label="Search" placeholder="Search" />
        <svg width="46" height="26" viewBox="0 0 46 26"><path d="M1 20q22-8 44 0-3 5-22 5T1 20z" fill="#63974a"/><path d="M3 21v-8l2-3 2 3 3-3 2 3 2-4 2 4 2-4 2-2 1-5 2-2 2 2 1 5 2 2 3 4 2-4 2 4 2-3 3 3 2-3 2 3v8z" fill="#bd9560"/><path d="M5 15h36M5 18h36" stroke="#805e36" stroke-dasharray="2 1.500"/><path d="M20 6 23 0l3 6v14h-6z" fill="#dcb577"/><path d="M21 10h4M21 14h4" stroke="#87602f"/><path d="M19 20h8l-2 4h-4z" fill="#ecd5a7"/></svg>
      </label>
      {#each apps as [label, name, state]}
        <button class="app {state ?? ''}" aria-label={label}>{@render icon(name)}</button>
      {/each}
    </div>
    <div class="tray">
      <button aria-label="Hidden icons"><svg width="16" height="16" viewBox="0 0 16 16" class="line"><path stroke-width="1.500" d="m3 10.500 5-5 5 5"/></svg></button>
      <svg width="16" height="16" viewBox="0 0 16 16" stroke="#fff" stroke-width="1.800"><path d="M1 5h9M13 5h2M10.500 2.500v5M1 11h3M6 11h9M5.500 8.500v5"/></svg>
      <svg width="16" height="16" viewBox="0 0 16 16" fill="none" stroke="#fff" stroke-width="1.800"><path d="M1.500 4v9M4.500 13V5l3.500 4 3.500-4v8M14.500 4v9"/></svg>
      <svg width="18" height="16" viewBox="0 0 18 16"><path d="M4 12a3.500 3.500 0 0 1 0-7Q8-1 13 5l2 3z" fill="#a9a9a9"/><path d="M4 13q-4-1-3-4 2-3 5-1 5-5 8 0 4 0 3 4l-2 1z" fill="#f2f2f2"/></svg>
      <span class="lang">ENG<br />US</span>
      <div class="status">
        <svg width="18" height="18" viewBox="0 0 18 18" class="line"><path d="M1.500 7.500q7.500-7 15 0M4 10q5-5 10 0M6.500 12.500q2.500-2.500 5 0"/><circle cx="9" cy="14.500" r=".8" fill="#fff"/></svg>
        <svg width="18" height="18" viewBox="0 0 18 18" class="line"><path d="M1.500 6.500v5h3L9 15V3L4.500 6.500zM11.500 6.500q1.500 2.500 0 5M13.500 4.500q3 4.500 0 9M15.500 3q4 6 0 12"/></svg>
        <svg width="18" height="18" viewBox="0 0 18 18" class="line"><rect x="2" y="5.500" width="13" height="8" rx="1.500"/><path d="M5 7.500h8.500v4H5z" fill="#fff"/><path d="M16.500 8v3M4.500 1 2 5h3l-1 4" stroke-width="1.400"/></svg>
      </div>
      <span class="time">2:40 PM<br />8/23/2024</span>
      <svg class="bell" width="14" height="16" viewBox="0 0 14 16" fill="#96e3e8"><path d="M7 1a4.800 4.800 0 0 0-4.800 5v3.500L.5 12.500h13L11.800 9.500V6A4.800 4.800 0 0 0 7 1zM5 13.500h4q-2 3-4 0z"/></svg>
      <button aria-label="Copilot preview"><svg width="26" height="26" viewBox="0 0 26 26"><defs><linearGradient id="pv" x2="0" y2="1"><stop stop-color="#1681dc"/><stop offset=".5" stop-color="#28b59a"/><stop offset="1" stop-color="#d7cf35"/></linearGradient><linearGradient id="pw" x2="0" y2="1"><stop stop-color="#9b5de8"/><stop offset="1" stop-color="#f45f91"/></linearGradient></defs><path d="M8 2h6q2 0 2.500 2l.5 3h-3q-2 0-2.500 2l-2 8q-.5 2-2.500 2H4q-3 0-2-4L4.500 5q1-3 3.500-3z" fill="url(#pv)"/><path d="M12 22q2-14 5-14h4q3 0 2 4l-3 10z" fill="url(#pw)"/><rect x="6" y="17" width="19" height="8" rx="2" fill="#ffc20c"/><text x="15.500" y="24" text-anchor="middle" class="pre">PRE</text></svg></button>
    </div>
  </footer>
</div>

<style>
  :global(body) { margin: 0; background: #55565b; }
  * { box-sizing: border-box; }
  .screen { display: flex; flex-direction: column; height: 100vh; overflow: hidden; background: #56575c; color: #fff; font-family: "Open Sans", "Noto Sans", sans-serif; }
  button { display: flex; align-items: center; justify-content: center; padding: 0; border: 0; background: none; color: inherit; font: inherit; }
  svg { flex: none; }
  .line { fill: none; stroke: #f4f4f4; stroke-width: 1.200; }
  .dim { stroke: #95969a; }

  .tabbar { display: flex; height: 34px; background: #38393c; }
  .lead { display: flex; width: 131px; padding-left: 1px; }
  .lead button { width: 41px; }
  .tabs { display: flex; flex: 1; min-width: 0; }
  .tab { display: flex; flex: 1 1 0; align-items: center; min-width: 0; padding: 0 3px 0 11px; background: linear-gradient(#77787b, #77787b) left center / 1px 20px no-repeat; font-size: 12px; }
  .tab.active { background: #56575c; border-radius: 8px 8px 0 0; }
  .tab.active + .tab { background: none; }
  .fav { display: flex; width: 26px; }
  .tabtext { flex: 1; white-space: nowrap; mask-image: linear-gradient(90deg, #000 45%, transparent 90%); }
  .x { flex: none; width: 20px; height: 24px; }
  .plus { width: 44px; background: linear-gradient(#77787b, #77787b) left center / 1px 20px no-repeat; }
  .winctl { display: flex; margin-left: 35px; }
  .winctl button { width: 46px; }

  .toolbar { display: flex; align-items: center; height: 38px; padding: 0 4px 0 6px; }
  .tool { width: 44px; height: 30px; }
  .tool.cop { width: 38px; }
  .rule { width: 1px; height: 18px; margin: 0 0 0 4px; background: #7a7b80; }
  .address { display: flex; flex: 1; align-items: center; height: 30px; margin: 0 6px; padding: 0 5px 0 17px; border-radius: 15px; background: #454649; font-size: 13px; }
  .file { margin-left: 7px; padding-right: 12px; border-right: 1px solid #77787c; line-height: 16px; }
  .address input { flex: 1; min-width: 0; padding: 0 0 0 12px; border: 0; outline: 0; background: none; color: #fff; font: inherit; }
  .address button { width: 40px; }

  .view { display: flex; flex: 1; min-height: 0; margin: 0 4px 4px; overflow: hidden; border-radius: 8px; background: #2c2e37; font-family: "Liberation Sans", Arial, sans-serif; font-size: 16px; line-height: 18px; }
  .view a { color: #fff; text-decoration: none; }
  aside { width: 270px; flex: none; padding: 10px; background: #1a1d24; }
  h1 { margin: 0; font-size: 24px; font-weight: 400; line-height: 28px; }
  ul { display: flex; flex-direction: column; gap: 40px; margin: 40px 0 0; padding: 0 10px; list-style: none; }
  li a { display: flex; align-items: baseline; gap: 9px; height: 28px; }
  main { flex: 1; min-width: 0; padding: 20px; }
  .top { display: flex; align-items: center; background: #1a1d24; }
  article { flex: 1; margin: 10px; padding: 20px 15px 16px; border: 2px solid #737476; border-radius: 8px; box-shadow: 0 4px 8px rgba(0, 0, 0, .2); }
  h2 { margin: 0; font-size: 24px; line-height: 28px; }
  article h2 { margin-top: 15px; }
  article p { margin: 20px 0 15px; }
  .top nav { display: flex; gap: 40px; padding: 0 20px; }
  .comp { margin: 40px 0; }
  .bars { display: grid; gap: 20px; }
  .bars div { height: 40px; border-radius: 10px; background: #1a1d24; }
  .mapcard { margin-top: 40px; padding: 20px; border-radius: 10px; background: #1a1d24; }
  .map { position: relative; height: 400px; overflow: hidden; background: #ddd; }
  .ground { display: block; width: 100%; height: 100%; font-family: "Noto Sans", sans-serif; }
  .ground text { text-anchor: middle; paint-order: stroke; stroke: #fff; stroke-opacity: .8; stroke-width: 3px; stroke-linejoin: round; }
  .ground .big { font-size: 15px; fill: #333; }
  .ground .small { font-size: 11px; fill: #333; }
  .ground .grey { font-size: 13px; fill: #777; }
  .ground .road { font-size: 10px; fill: #111; stroke: none; text-anchor: start; }
  .ground .river { font-size: 10px; fill: #4d80b3; stroke-width: 1px; text-anchor: start; }
  .ground path { stroke-linejoin: round; }
  .c1, .c2, .f1, .f2, .cy, .fy, .co, .fo { fill: none; stroke-linecap: round; }
  .c1 { stroke: #c0bdba; stroke-width: 10; }
  .f1 { stroke: #fff; stroke-width: 7; }
  .c2 { stroke: #b5b3b0; stroke-width: 14; }
  .f2 { stroke: #fff; stroke-width: 11; }
  .cy { stroke: #a9ae64; stroke-width: 17; }
  .fy { stroke: #f4f9b4; stroke-width: 13; }
  .co { stroke: #c0842c; stroke-width: 18; }
  .fo { stroke: #fad09a; stroke-width: 14; }
  .dots { fill: none; stroke: #c3a6c2; stroke-width: 3; stroke-dasharray: 5 8; }
  .border { fill: none; stroke: #b79bb8; stroke-width: 7; stroke-dasharray: 34 6 8 6; }
  .zoom { position: absolute; top: 10px; left: 10px; border: 2px solid rgba(0, 0, 0, .2); border-radius: 4px; background-clip: padding-box; }
  .zoom button { width: 30px; height: 31px; padding-top: 4px; background: #fff; color: #000; font: bold 22px/26px "Liberation Mono", monospace; }
  .zoom button:first-child { border-bottom: 1px solid #ccc; border-radius: 2px 2px 0 0; }
  .zoom button:last-child { border-radius: 0 0 2px 2px; }
  .popup { position: absolute; top: 108px; left: 380px; width: 235px; padding: 13px 20px; border-radius: 12px; background: #fff; color: #333; box-shadow: 0 3px 14px rgba(0, 0, 0, .4); font-size: 13px; line-height: 17px; white-space: nowrap; }
  .popup button { position: absolute; top: 0; right: 0; width: 24px; height: 24px; color: #757575; font: 16px/24px "Liberation Sans", Arial, sans-serif; }

  .scroll { display: flex; flex-direction: column; align-items: center; width: 15px; padding: 8px 0; background: #fcfcfc; }
  .up, .down { border: 5px solid transparent; border-top: 0; border-bottom: 7px solid #8b8b8b; }
  .thumb { width: 9px; height: 64%; margin-top: 8px; border-radius: 5px; background: #8b8b8b; }
  .down { margin-top: auto; border-top: 7px solid #8b8b8b; border-bottom: 0; }

  footer { display: flex; align-items: center; height: 48px; padding: 0 19px 2px 18px; background: linear-gradient(90deg, #16292b 0 22%, #24282a 40% 64%, #17292b 74%); border-top: 1px solid #3f4546; }
  .weather { width: 32px; height: 40px; }
  .badge { font-size: 10px; fill: #222; }
  .dock { display: flex; align-items: center; margin-left: 194px; }
  .dock > button { width: 44px; height: 40px; }
  .find { display: flex; align-items: center; width: 220px; height: 32px; margin: 0 2px 0 3px; padding: 0 4px 0 11px; border: 1px solid #51605f; border-radius: 16px; background: #394746; }
  .find input { flex: 1; min-width: 0; padding: 0 0 0 9px; border: 0; outline: 0; background: none; color: #fff; font: 13px "Open Sans", sans-serif; }
  .find input::placeholder { color: #d5dada; opacity: 1; }
  .app { position: relative; }
  .dock > .app.active { width: 40px; margin: 0 2px; border: 1px solid #3b3e40; border-radius: 4px; background: #333638; }
  .app.active::after, .app.open::after { content: ""; position: absolute; bottom: 1px; width: 6px; height: 3px; border-radius: 2px; background: #999; }
  .app.active::after { bottom: 0; width: 16px; background: #76d6dc; }
  .pstext { font: bold 12px "Open Sans", sans-serif; fill: #31a8ff; }
  .tray { display: flex; align-items: center; gap: 16px; margin-left: auto; font-size: 12px; line-height: 16px; }
  .lang { font-size: 11px; text-align: center; }
  .status { display: flex; gap: 6px; }
  .time { font-size: 11px; text-align: right; }
  .tray .time, .tray .lang { font-size: 12px; }
  .bell { margin-left: -8px; }
  .pre { font: bold 7px "Open Sans", sans-serif; fill: #222; }
</style>
